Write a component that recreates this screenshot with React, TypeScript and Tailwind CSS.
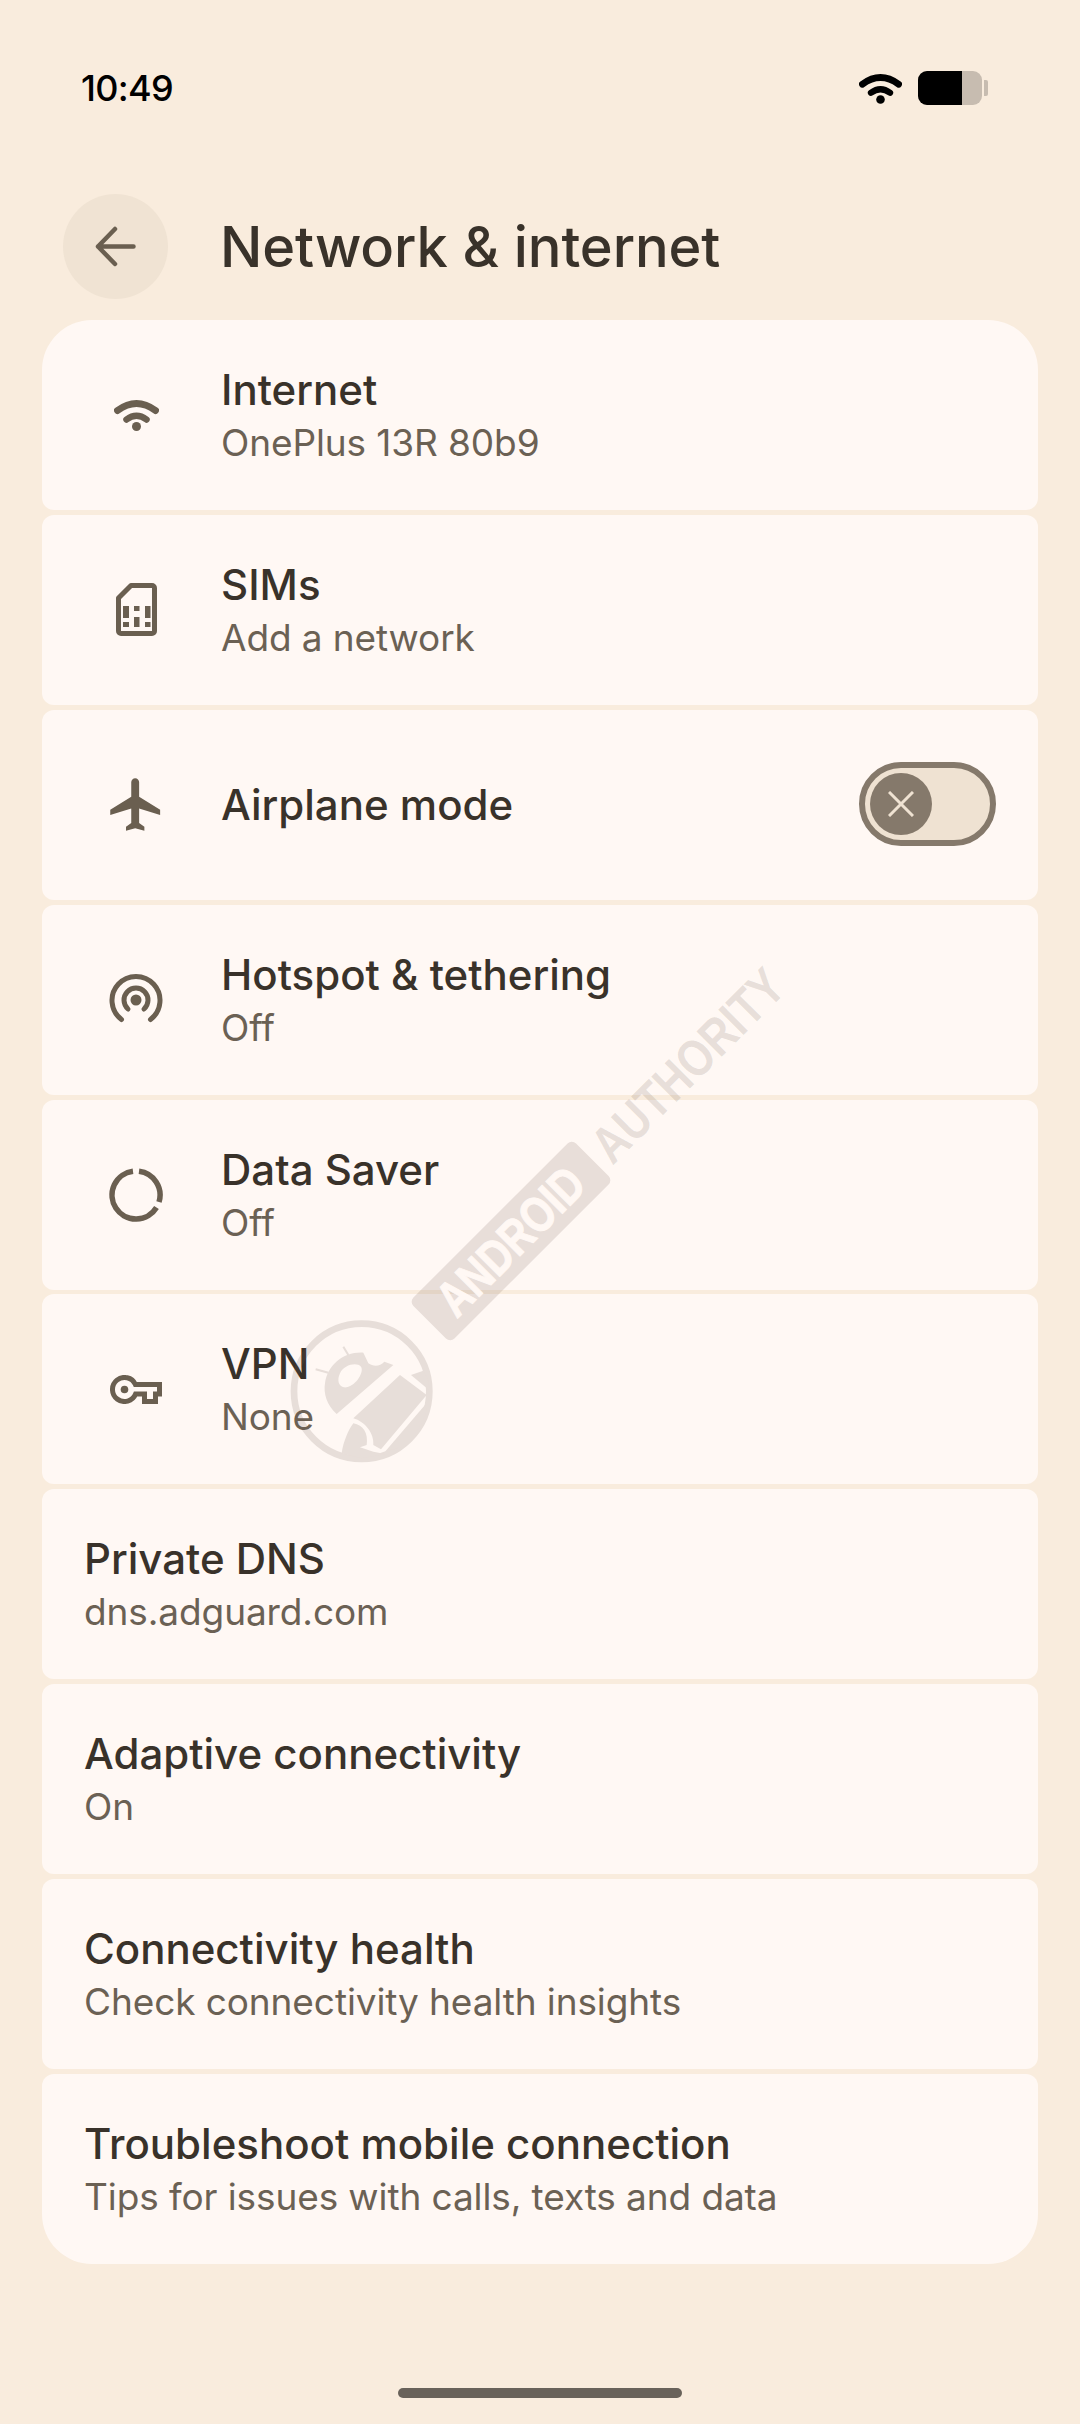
const ink = '#6a5f50';

function WifiGlyph({color, className}: {color: string; className: string}) {
	return (
		<svg viewBox="0 0 45 32" className={className} fill="none" stroke={color} strokeLinecap="round">
			<path d="M3.5 11.5Q22.5 -2.5 41.5 11.5" strokeWidth="7" />
			<path d="M12.5 20.5Q22.5 13 32.5 20.5" strokeWidth="6.5" />
			<circle cx="22.5" cy="27.5" r="4.5" fill={color} stroke="none" />
		</svg>
	);
}

function SimIcon() {
	return (
		<svg viewBox="0 0 41 53" className="w-[41px] h-[53px]" fill={ink}>
			<path d="M15 2.5H36a2.5 2.5 0 0 1 2.5 2.5V48a2.5 2.5 0 0 1-2.5 2.5H5A2.5 2.5 0 0 1 2.5 48V15Z" fill="none" stroke={ink} strokeWidth="5" strokeLinejoin="round" />
			<rect x="7" y="23" width="6" height="12" />
			<rect x="7" y="39" width="6" height="5" />
			<rect x="18" y="23" width="5.5" height="5" />
			<rect x="18" y="34" width="5.5" height="10" />
			<rect x="29" y="23" width="5.5" height="12" />
			<rect x="29" y="39" width="5.5" height="5" />
		</svg>
	);
}

function PlaneIcon() {
	return (
		<svg viewBox="0 0 24 24" className="w-[63px] h-[63px]" fill={ink}>
			<path d="M21 16v-2l-8-5V3.5c0-.83-.67-1.5-1.5-1.5S10 2.67 10 3.5V9l-8 5v2l8-2.5V19l-2 1.5V22l3.5-1 3.5 1v-1.5L13 19v-5.5l8 2.5z" />
		</svg>
	);
}

function HotspotIcon() {
	return (
		<svg viewBox="-28 -28 56 56" className="w-[56px] h-[56px]" fill="none" stroke={ink} strokeWidth="5" strokeLinecap="round">
			<path d="M-14.5 19.5A24 24 0 1 1 14.5 19.5" />
			<path d="M-8 9A12 12 0 1 1 8 9" />
			<circle r="5.5" fill={ink} stroke="none" />
		</svg>
	);
}

function SaverIcon() {
	return (
		<svg viewBox="-28 -28 56 56" className="w-[56px] h-[56px]" fill="none" stroke={ink} strokeWidth="5.5">
			<path d="M3 -23.8A24 24 0 0 1 23 7" />
			<path d="M20.5 12.5A24 24 0 1 1 -3 -23.8" />
		</svg>
	);
}

function KeyIcon() {
	return (
		<svg viewBox="0 0 52 29" className="w-[52px] h-[29px]" fill="none" stroke={ink} strokeWidth="5">
			<path d="M25.4 9.5H49.5V19H45.5V26.5H34.5V19H25.6A12 12 0 1 1 25.4 9.5Z" />
			<circle cx="14.5" cy="14.5" r="3.8" fill={ink} stroke="none" />
		</svg>
	);
}

type Row = {
	title: string;
	sub?: string;
	icon?: React.ReactNode;
};

const rows: Row[] = [
	{title: 'Internet', sub: 'OnePlus 13R 80b9', icon: <WifiGlyph color={ink} className="w-[45px] h-[32px]" />},
	{title: 'SIMs', sub: 'Add a network', icon: <SimIcon />},
	{title: 'Airplane mode', icon: <PlaneIcon />},
	{title: 'Hotspot & tethering', sub: 'Off', icon: <HotspotIcon />},
	{title: 'Data Saver', sub: 'Off', icon: <SaverIcon />},
	{title: 'VPN', sub: 'None', icon: <KeyIcon />},
	{title: 'Private DNS', sub: 'dns.adguard.com'},
	{title: 'Adaptive connectivity', sub: 'On'},
	{title: 'Connectivity health', sub: 'Check connectivity health insights'},
	{title: 'Troubleshoot mobile connection', sub: 'Tips for issues with calls, texts and data'},
];

function Toggle() {
	return (
		<div className="w-[137px] h-[84px] rounded-full border-[6px] border-[#85796b] bg-[#efe2d2] flex items-center pl-[5px] mb-[2px]">
			<div className="w-[62px] h-[62px] rounded-full bg-[#85796b] flex items-center justify-center">
				<svg viewBox="0 0 26 26" className="w-[26px] h-[26px]" stroke="#efe2d2" strokeWidth="3">
					<path d="M1 1L25 25M25 1L1 25" />
				</svg>
			</div>
		</div>
	);
}

function Watermark() {
	return (
		<>
			<div className="absolute left-[396px] top-[1212px] w-[230px] h-[58px] rotate-[-45deg] rounded-[6px] bg-[#6e5a50]/[0.16] flex items-center justify-center">
				<span className="font-['Liberation_Sans',sans-serif] font-bold text-[50px] leading-none text-[#fff8f4] scale-x-[0.8] [-webkit-text-stroke:1px_#fff8f4]">ANDROID</span>
			</div>
			<div className="absolute left-[568px] top-[1045px] w-[240px] h-[40px] rotate-[-45deg] flex items-center justify-center">
				<span className="font-['Liberation_Sans',sans-serif] font-bold text-[52px] leading-none text-[#6e5a50]/[0.16] scale-x-[0.82] whitespace-nowrap">AUTHORITY</span>
			</div>
			<svg viewBox="0 0 480 480" className="absolute left-[285px] top-[1310px] w-[160px] h-[160px] opacity-[0.16]" fill="#6e5a50">
				<circle cx="230" cy="244" r="203" fill="none" stroke="#6e5a50" strokeWidth="20" />
				<path fillRule="evenodd" d="M155 312C125 285 115 250 120 220C128 165 175 125 235 128L250 160C265 170 285 170 298 155L325 165ZM165 190C175 165 215 155 228 170C238 185 215 225 185 232C160 235 155 210 165 190Z" />
				<path d="M175 110L190 135M92 178L130 188" fill="none" stroke="#6e5a50" strokeWidth="6" />
				<path d="M345 195L425 255L288 418L265 405C268 370 240 335 205 325Z" />
				<path d="M378 195L415 182Q435 215 432 240Z" />
				<path d="M170 430C175 395 190 360 205 340C235 345 250 370 245 405L225 412L265 425L300 432L230 445Z" />
				<path d="M420 285L300 425L350 410Q410 360 425 300Z" />
			</svg>
		</>
	);
}

export default function App() {
	return (
		<div className="relative w-[1080px] h-[2424px] bg-[#f9ecdd] font-['Inter',sans-serif] overflow-hidden">
			<div className="h-[176px] flex items-center justify-between pl-[81px] pr-[92px]">
				<span className="text-[36px] font-[450] text-black tracking-[-0.7px]">10:49</span>
				<div className="flex items-center gap-[16px]">
					<WifiGlyph color="#000" className="w-[43px] h-[31px]" />
					<div className="flex items-center gap-[2px]">
						<div className="w-[64px] h-[34px] rounded-[9px] bg-[#c7bcb0] overflow-hidden">
							<div className="w-[44px] h-full bg-black" />
						</div>
						<div className="w-[4px] h-[16px] rounded-r-[2px] bg-[#c7bcb0]" />
					</div>
				</div>
			</div>

			<div className="mt-[18px] h-[105px] flex items-center pl-[63px]">
				<div className="w-[105px] h-[105px] rounded-full bg-[#f0e3d3] flex items-center justify-center">
					<svg viewBox="0 0 41 41" className="w-[41px] h-[41px]" fill="none" stroke={ink} strokeWidth="4.5" strokeLinecap="round" strokeLinejoin="round">
						<path d="M38.5 20.5H3M20 3L3 20.5L20 38" />
					</svg>
				</div>
				<h1 className="ml-[52px] text-[56px] font-[450] tracking-[-0.1px] text-[#39322a] whitespace-nowrap">Network &amp; internet</h1>
			</div>

			<div className="mt-[21px] mx-[42px] flex flex-col gap-[4.9px]">
				{rows.map((row, i) => (
					<div
						key={row.title}
						className={`h-[190px] bg-[#fff8f4] flex items-center ${i === 0 ? 'rounded-t-[50px] rounded-b-[12px]' : i === rows.length - 1 ? 'rounded-b-[50px] rounded-t-[12px]' : 'rounded-[12px]'} ${row.icon ? '' : 'pl-[42px]'}`}
					>
						{row.icon && (
							<div className="w-[179px] shrink-0 flex justify-center pl-[9px]">{row.icon}</div>
						)}
						<div className="flex-1 flex flex-col gap-[6px]">
							<div className="text-[42px] leading-[50px] font-[450] text-[#39322a] whitespace-nowrap">{row.title}</div>
							{row.sub && <div className="text-[37px] leading-[44px] tracking-[-0.1px] text-[#6b6154] whitespace-nowrap">{row.sub}</div>}
						</div>
						{row.title === 'Airplane mode' && <div className="pr-[42px]"><Toggle /></div>}
					</div>
				))}
			</div>

			<div className="mt-[124px] mx-auto w-[284px] h-[10px] rounded-full bg-[#69625a]" />

			<Watermark />
		</div>
	);
}
